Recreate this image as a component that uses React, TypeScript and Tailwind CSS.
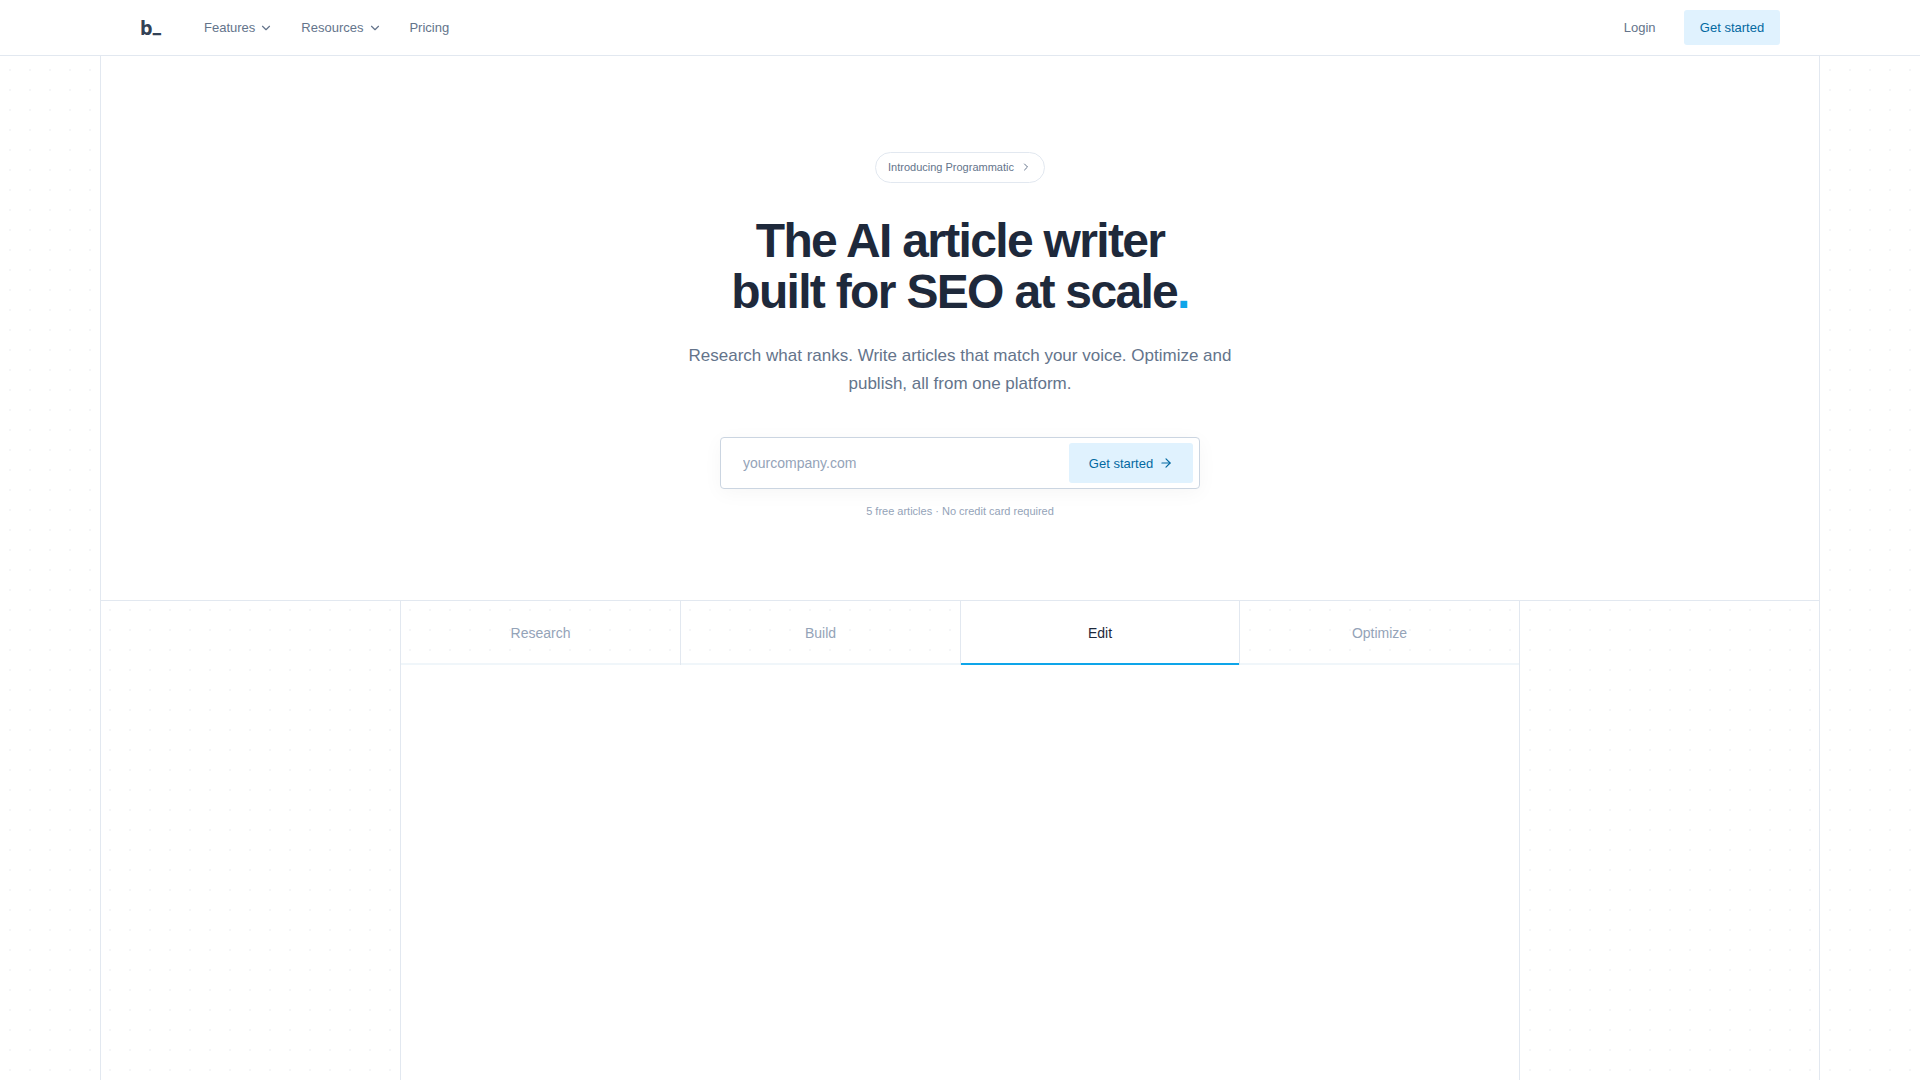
import React from "react";
import { ArrowRight, ChevronDown, ChevronRight } from "lucide-react";

const tabs = ["Research", "Build", "Edit", "Optimize"];
const activeTab = "Edit";

const Navbar = () => {
  return (
    <header className="h-14 border-b border-[#e2e8f0] bg-white">
      <div className="w-[1640px] h-full mx-auto flex items-center justify-between text-[13px] text-[#64748b]">
        <div className="flex items-center">
          <a
            href="#"
            className="w-16 font-['Noto_Sans',sans-serif] text-[20px] leading-5 font-bold text-[#334155]"
          >
            b
            <span className="relative -top-[3px] text-shadow-[0_-1px_0_#334155]">
              _
            </span>
          </a>
          <nav className="flex items-center">
            <a href="#" className="flex items-center gap-1 mr-7">
              Features
              <ChevronDown className="size-3.5" />
            </a>
            <a href="#" className="flex items-center gap-[5px] mr-[27px]">
              Resources
              <ChevronDown className="size-3.5" />
            </a>
            <a href="#">Pricing</a>
          </nav>
        </div>
        <div className="flex items-center">
          <a href="#" className="mr-[28.5px]">
            Login
          </a>
          <a
            href="#"
            className="h-[35px] w-24 flex items-center justify-center rounded-[3px] bg-[#e0f2fe] text-[#0369a1]"
          >
            Get started
          </a>
        </div>
      </div>
    </header>
  );
};

const Hero = () => {
  return (
    <section className="h-[545px] border-b border-[#e2e8f0] bg-white flex flex-col items-center pt-24 text-center">
      <a
        href="#"
        className="h-[31px] w-[170px] flex items-center justify-center gap-1.5 rounded-full border border-[#e2e8f0] text-[11px] text-[#64748b]"
      >
        Introducing Programmatic
        <ChevronRight className="size-3 mb-px" />
      </a>
      <h1 className="mt-8 text-[48px] leading-[51px] font-bold tracking-[-1.68px] text-[#1e293b]">
        The AI article writer
        <br />
        built for SEO at scale<span className="text-[#0ea5e9]">.</span>
      </h1>
      <p className="mt-[25px] w-[560px] text-[17px] leading-7 text-[#64748b]">
        Research what ranks. Write articles that match your voice. Optimize and
        publish, all from one platform.
      </p>
      <form className="mt-[39px] h-[52px] w-[480px] flex items-center rounded border border-[#cbd5e1] bg-white pl-[22px] pr-1.5 shadow-[0_4px_20px_rgba(0,0,0,0.04)]">
        <input
          type="text"
          placeholder="yourcompany.com"
          className="flex-1 min-w-0 text-[14px] outline-none placeholder:text-[#94a3b8]"
        />
        <button
          type="button"
          className="h-10 w-[124px] flex items-center justify-center gap-1.5 rounded-[3px] bg-[#e0f2fe] text-[13px] text-[#0369a1]"
        >
          <span className="pt-px">Get started</span>
          <ArrowRight className="size-3.5" />
        </button>
      </form>
      <p className="mt-3.5 text-[11px] leading-4 text-[#94a3b8]">
        5 free articles · No credit card required
      </p>
    </section>
  );
};

const ProductTabs = () => {
  return (
    <section className="w-[1120px] flex-1 mx-auto flex flex-col border-x border-[#e2e8f0]">
      <div className="grid grid-cols-[279px_280px_279px_280px] h-16 text-[14px]">
        {tabs.map((tab) => (
          <button
            key={tab}
            className={`border-[#e2e8f0] border-l first:border-l-0 ${
              tab === activeTab
                ? "bg-white text-[#1e293b] shadow-[inset_0_-2px_0_#0ea5e9]"
                : "text-[#94a3b8] shadow-[inset_0_-2px_0_#f0f6fa]"
            }`}
          >
            {tab}
          </button>
        ))}
      </div>
      <div className="flex-1 bg-white" />
    </section>
  );
};

const App = () => {
  return (
    <div className="h-screen overflow-hidden flex flex-col bg-white bg-[radial-gradient(circle,#f5f6f8_1px,transparent_1px)] bg-size-[20px_20px] font-['Liberation_Sans',Arial,sans-serif]">
      <Navbar />
      <main className="w-[1720px] flex-1 mx-auto flex flex-col border-x border-[#e2e8f0]">
        <Hero />
        <ProductTabs />
      </main>
    </div>
  );
};

export default App;
